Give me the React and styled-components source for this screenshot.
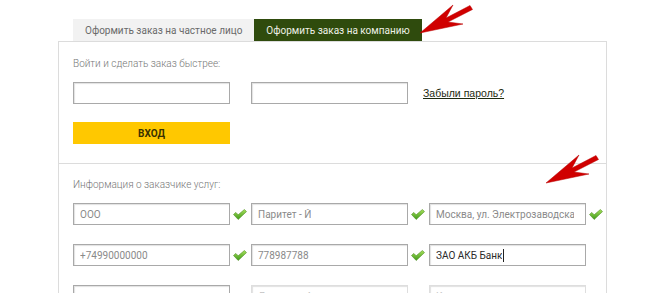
import React from 'react';
import styled, { createGlobalStyle } from 'styled-components';


// global
const GlobalStyle = createGlobalStyle`
  html, body {
    margin: 0;
    padding: 0;
    background: #fff;
  }
  body {
    font-family: Roboto, "Liberation Sans", sans-serif;
  }
`


// styled-components
const Page = styled.div`
  position: relative;
  width: 667px;
  height: 293px;
  overflow: hidden;
  padding: 19px 0 0 58px;
  box-sizing: border-box;
`

const Tabs = styled.div`
  display: flex;
  padding-left: 15px;
`

const Tab = styled.div`
  height: 22px;
  padding: 0 12px;
  display: flex;
  align-items: center;
  font-size: 10px;
  white-space: nowrap;
  background: ${p => (p.active ? '#2f4b0d' : '#f2f2f2')};
  color: ${p => (p.active ? '#eef0e6' : '#6a6a6a')};
`

const Panel = styled.div`
  width: 549px;
  box-sizing: border-box;
  border: 1px solid #dcdcdc;
  border-bottom: none;
`

const Section = styled.div`
  padding: ${p => p.top}px 14px ${p => p.bottom}px 14px;
  border-bottom: ${p => (p.divided ? '1px solid #dcdcdc' : 'none')};
`

const Label = styled.div`
  font-size: 10px;
  line-height: 14px;
  font-weight: 300;
  color: #767676;
  margin-bottom: 11px;
`

const LoginRow = styled.div`
  display: flex;
  align-items: center;
  gap: 21px;
`

const Field = styled.div`
  width: 157px;
  height: 22px;
  box-sizing: border-box;
  border: 1px solid ${p => (p.faint ? '#dedede' : '#a9a9a9')};
  box-shadow: inset 1px 1px 1px rgba(0, 0, 0, 0.12);
  background: #fff;
  display: flex;
  align-items: center;
  padding: 0 11px 0 6px;
  font-size: 10px;
  color: ${p => (p.dark ? '#2a2a2a' : p.faint ? '#c4c4c4' : '#8a8a8a')};
  white-space: nowrap;
`

const Value = styled.span`
  overflow: hidden;
  min-width: 0;
  display: flex;
  align-items: center;
`

const Caret = styled.span`
  display: inline-block;
  width: 1px;
  height: 13px;
  background: #222;
  margin-left: 1px;
`

const ForgotLink = styled.a`
  margin-left: -6px;
  font-family: "Liberation Sans", Arial, sans-serif;
  font-size: 10.5px;
  color: #1d2a10;
  text-decoration: underline;
  cursor: pointer;
`

const LoginButton = styled.button`
  display: block;
  margin-top: 18px;
  width: 157px;
  height: 22px;
  border: none;
  background: #ffc800;
  font-family: Roboto, "Liberation Sans", sans-serif;
  font-size: 10px;
  font-weight: 700;
  color: #3a3200;
  padding: 0;
`

const Grid = styled.div`
  display: grid;
  grid-template-columns: repeat(3, 178px);
  row-gap: 19px;
`

const Cell = styled.div`
  display: flex;
  align-items: center;
`

const CheckSlot = styled.div`
  width: 19px;
  display: flex;
  justify-content: center;
`

const ArrowWrap = styled.svg`
  position: absolute;
  left: ${p => p.x}px;
  top: ${p => p.y}px;
`


// icons
const Check = () => (
  <svg width="14" height="11" viewBox="0 0 14 11">
    <defs>
      <linearGradient id="chk" x1="0" y1="0" x2="0" y2="1">
        <stop offset="0" stopColor="#a6e05a" />
        <stop offset="1" stopColor="#3f9a1a" />
      </linearGradient>
    </defs>
    <polygon
      points="0.5,5.5 2.8,3.4 5.2,5.8 11.4,0.5 13.5,2.6 5.2,10.5"
      fill="url(#chk)"
      stroke="#4f8f22"
      strokeWidth="0.6"
      strokeLinejoin="round"
    />
  </svg>
);

const Arrow = ({ x, y }) => (
  <ArrowWrap x={x} y={y} width="56" height="32" viewBox="0 0 56 32">
    <polygon
      points="1,29 34,1 27,14 51,1.5 53.5,5.5 29,18 44,20"
      fill="#d00000"
      stroke="#b80000"
      strokeWidth="0.5"
      strokeLinejoin="round"
    />
  </ArrowWrap>
);


// data
const rows = [
  [
    { value: 'ООО', ok: true },
    { value: 'Паритет - Й', ok: true },
    { value: 'Москва, ул. Электрозаводская', ok: true },
  ],
  [
    { value: '+74990000000', ok: true },
    { value: '778987788', ok: true },
    { value: 'ЗАО АКБ Банк', dark: true, caret: true },
  ],
  [
    { value: '' },
    { value: 'Директор А', faint: true },
    { value: 'Контакт', faint: true },
  ],
];


// components
const App = () => {
  return (
    <Page>
      <GlobalStyle />
      <Tabs>
        <Tab>Оформить заказ на частное лицо</Tab>
        <Tab active>Оформить заказ на компанию</Tab>
      </Tabs>
      <Panel>
        <Section top={15} bottom={19} divided>
          <Label>Войти и сделать заказ быстрее:</Label>
          <LoginRow>
            <Field />
            <Field />
            <ForgotLink>Забыли пароль?</ForgotLink>
          </LoginRow>
          <LoginButton>ВХОД</LoginButton>
        </Section>
        <Section top={14} bottom={20}>
          <Label>Информация о заказчике услуг:</Label>
          <Grid>
            {rows.flat().map((f, i) => (
              <Cell key={i}>
                <Field dark={f.dark} faint={f.faint}>
                  <Value>{f.value}</Value>
                  {f.caret && <Caret />}
                </Field>
                <CheckSlot>{f.ok && <Check />}</CheckSlot>
              </Cell>
            ))}
          </Grid>
        </Section>
      </Panel>
      <Arrow x={419} y={4} />
      <Arrow x={545} y={154} />
    </Page>
  );
}


export default App;
